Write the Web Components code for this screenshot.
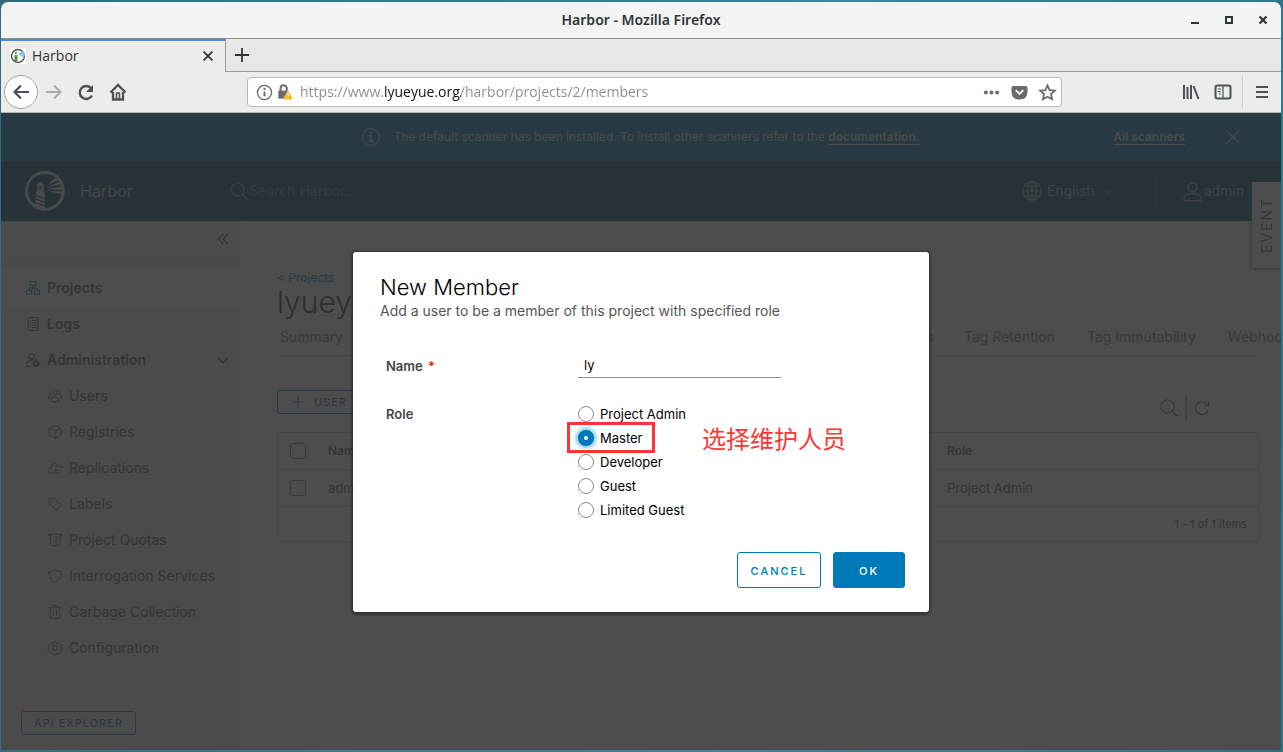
<!DOCTYPE html>
<html lang="en">
<head>
<meta charset="utf-8">
<title>Harbor</title>
<style>
html, body { margin: 0; height: 100%; }
body { font-family: Inter, "Noto Sans CJK SC", sans-serif; font-size: 14px; line-height: 24px; overflow: hidden; background: linear-gradient(100deg, #2f6d80, #3c859b 60%, #2f7285); }
</style>
</head>
<body>
<desktop-window>
  <window-title slot="title">Harbor - Mozilla Firefox</window-title>
  <browser-tabs slot="tabs">Harbor</browser-tabs>
  <browser-toolbar slot="toolbar"></browser-toolbar>
  <harbor-app></harbor-app>
</desktop-window>

<script>
const ICONS = {
  back: '<path d="M2 9h15M9 2.500L2.500 9 9 15.500" stroke-width="2.200"/>',
  forward: '<path d="M1 9h15M9 2.500L15.500 9 9 15.500" stroke-width="2"/>',
  reload: '<path d="M15 12.500A6.500 6.500 0 1 1 14 5" stroke-width="2.400"/><path d="M16 2v7H9z" fill="currentColor" stroke="none"/>',
  home: '<path d="M1.500 9.500L9 2l7.500 7.500M4 9v7.500h10V9" stroke-width="2.300"/><path d="M7.500 10h3v6h-3z" stroke-width="1.500"/>',
  info: '<circle cx="9" cy="9" r="7.500" stroke-width="1.400"/><path d="M9 8v5" stroke-width="2"/><circle cx="9" cy="5.300" r="1.200" fill="currentColor" stroke="none"/>',
  infoThin: '<circle cx="9" cy="9" r="8.400"/><path d="M7.300 7.600h2v5.600M7 13.400h4.600" stroke-width="1.200"/><circle cx="9" cy="4.900" r="1" fill="currentColor" stroke="none"/>',
  lock: '<path d="M4 8V5a3.500 3.500 0 0 1 7 0V8" stroke-width="2.200"/><path d="M1.500 7.500h11v9h-11z" fill="currentColor" stroke="none"/><path d="M12.500 7l5.500 10.500H7z" fill="#ffb000" stroke="#fff" stroke-width=".5"/><path d="M12.500 10.500v3.300M12.500 14.800v1.300" stroke="#fff" stroke-width="1.400"/>',
  dots: '<g fill="currentColor" stroke="none"><circle cx="3" cy="9" r="2.100"/><circle cx="9" cy="9" r="2.100"/><circle cx="15" cy="9" r="2.100"/></g>',
  pocket: '<path d="M.5 4q0-2 2-2h13q2 0 2 2v4q0 8.500-8.500 8.500T.500 8z" fill="currentColor" stroke="none"/><path d="M5 6.500l4 4 4-4" stroke="#fff" stroke-width="2"/>',
  star: '<path d="M9 1.500l2.200 5 5.500.6-4 3.600 1.200 5.500L9 13.500l-4.900 2.700 1.200-5.500-4-3.600 5.500-.6z" stroke-width="1.900"/>',
  library: '<path d="M2 2v14M5.500 4v12M9 2v14M11.500 3l5 13" stroke-width="2"/>',
  sidebar: '<rect x="1.500" y="2.500" width="15" height="13" rx="2" stroke-width="2"/><path d="M9 3v12M3.800 6h3M3.800 8.500h3M4.800 11h2" stroke-width="1.200"/>',
  menu: '<path d="M3 4h12M3 9h12M3 14h12" stroke-width="2"/>',
  close: '<path d="M4 4l10 10M14 4L4 14" stroke-width="2"/>',
  closeThin: '<path d="M1 1l16 16M17 1L1 17" stroke-width="1.500"/>',
  plus: '<path d="M9 1v16M1 9h16" stroke-width="2"/>',
  plusThin: '<path d="M9 1v16M1 9h16" stroke-width="1.400"/>',
  minimize: '<path d="M5 12h8" stroke-width="2"/>',
  maximize: '<path d="M6 6h6v6H6z" stroke-width="2"/>',
  closeBold: '<path d="M5.500 5.500l7 7M12.500 5.500l-7 7" stroke-width="2.200"/>',
  favicon: '<rect width="18" height="18" fill="#fff" stroke="none"/><circle cx="9" cy="9" r="7.300" stroke="#4a5257" stroke-width="1.500"/><path d="M5 8h3.500v6.500H5zM5.500 4.500h2v2.200h-2z" fill="#4a9b3c" stroke="none"/><path d="M9 7l5-4 3 3-1 5z" fill="#8cc3e8" stroke="none"/>',
  search: '<circle cx="7.500" cy="7.500" r="6.600"/><path d="M12.300 12.300l5 5" stroke-width="1.400"/>',
  refresh: '<path d="M16 11A7.200 7.200 0 1 1 15 5.200M16.500 1.500v4.800h-4.800" stroke-width="1.200"/>',
  globe: '<circle cx="9" cy="9" r="8.300"/><ellipse cx="9" cy="9" rx="4" ry="8.300"/><path d="M9 .7v16.600M.7 9h16.600M2.300 4.500h13.400M2.300 13.500h13.400"/>',
  user: '<circle cx="9" cy="5" r="4.200" stroke-width="1.300"/><path d="M1.200 17.700v-3.200c1.800-4.700 13.800-4.700 15.600 0v3.200z" stroke-width="1.300"/>',
  caret: '<path d="M2 6l7 7 7-7" stroke-width="2.200"/>',
  collapse: '<path d="M9 1.500L2 9l7 7.500M16 1.500L9 9l7 7.500" stroke-width="1.700"/>',
  projects: '<path d="M5.500.7h7v5h-7zM.7 12h6.500v5H.700zM10.800 12h6.500v5h-6.500zM9 5.700V9M4 12V9h10v3" stroke-width="1.300"/>',
  logs: '<path d="M2.700.7h12.600v16.600H2.700z" stroke-width="1.300"/><path d="M5 4.500h1.500M8 4.500h5M5 7.500h1.500M8 7.500h5M5 10.500h1.500M8 10.500h5M5 13.500h1.500M8 13.500h5" stroke-width="1.300"/>',
  admin: '<circle cx="7" cy="4.500" r="3.700" stroke-width="1.300"/><path d="M7.500 17H.700v-3.500c1-3 5-4.200 8-3.300" stroke-width="1.300"/><circle cx="13" cy="13.500" r="2.800" stroke-width="2.400"/><path d="M13 8.500v10M8.300 13.500h9.400M9.600 10l6.800 7M16.400 10l-6.800 7" stroke-width="1.500"/><circle cx="13" cy="13.500" r="1.500" fill="#eee" stroke="none"/>',
  users: '<circle cx="9" cy="5" r="2.800" stroke-width="1.200"/><path d="M4.500 16.500v-4c1.500-3 7.500-3 9 0v4zM5 1.500a2.500 2.500 0 1 0-1 5C2 7 .7 8.500.7 12h2M13 1.500a2.500 2.500 0 1 1 1 5c2 .5 3.300 2 3.300 5.500h-2" stroke-width="1.200"/>',
  registries: '<path d="M9 .8l7.500 3.500v9L9 17.200l-7.500-3.900v-9zM1.500 4.300L9 8l7.500-3.700M9 8v9" stroke-width="1.200"/>',
  replications: '<path d="M15.500 11c3 2 1.500 4.500-1.500 4.500H4C-.5 15.500-1.200 9.500 4 9c0-6 6.500-7.500 9-3.500M9 7h9.500M16 4.500L18.500 7 16 9.500M15 12H9M11 9.800L8.700 12l2.300 2.200" stroke-width="1.200"/>',
  labels: '<path d="M1 2h6.500l9.500 9-5.500 6L1 8z" stroke-width="1.200"/><circle cx="4.200" cy="5" r=".9" fill="currentColor" stroke="none"/>',
  quotas: '<path d="M.5 1.500h17v4M3.500 1.500v13q0 2 2 2h8q2 0 2-2v-13M.5 1.500L3.500 5M8 5h5M10 8h3M8 11h5M10 14h3" stroke-width="1.300"/>',
  shield: '<path d="M9 .8c2.500 1.800 5 2.300 7.500 2.400C17 10 14.500 14.500 9 17.300 3.500 14.500 1 10 1.500 3.200 4 3.100 6.500 2.600 9 .8z" stroke-width="1.200"/>',
  trash: '<path d="M1 3.500h16M6.500 3.500V.9h5v2.600M2.800 3.500v13.600h12.400V3.500M7 6.500v7.500M11 6.500v7.500" stroke-width="1.300"/>',
  gear: '<circle cx="9" cy="9" r="3.200" stroke-width="1.300"/><path d="M7.500.8h3l.5 2.300 1.500.6 2-1.300 2.100 2.100-1.300 2 .6 1.500 2.300.5v2l-2.300.5-.6 1.500 1.300 2-2.100 2.100-2-1.300-1.500.6-.5 2.300h-3l-.5-2.300-1.500-.6-2 1.300-2.100-2.100 1.300-2-.6-1.500-2.300-.5v-2l2.300-.5.6-1.500-1.300-2 2.100-2.100 2 1.300L7 3.100z" stroke-width="1.200"/>',
  logo: '<circle cx="9" cy="9" r="8.300" stroke-width="1.300"/><g fill="currentColor" stroke="none"><path d="M5.100 6.300L7 4.700l1.900 1.600zM5.500 6.300h2.900V9H5.500zM5 9.100h3.800l.2 8.100-4.400-1.300z"/><path d="M9.800 6.600l4.300-3.900 1.100 1.200zM9.800 7.300l5.900-2.600.6 1.400zM9.800 8l6.800-1v1.500zM9.800 8.700l6.900.5-.2 1.400z"/></g><path d="M5 11l4 1.500M5 12.700l4 1.500M5 14.300l4 1.500" stroke="#004a70" stroke-width=".5"/><path d="M6.400 6.800h1.100v1.500H6.400z" fill="#004a70" stroke="none"/>'
};

function define(name, html, setup) {
  const template = document.createElement('template');
  template.innerHTML = html;
  customElements.define(name, class extends HTMLElement {
    constructor() {
      super();
      this.attachShadow({ mode: 'open' }).append(template.content.cloneNode(true));
    }
    connectedCallback() { if (setup) setup(this, this.shadowRoot); }
  });
}

class UiIcon extends HTMLElement {
  static observedAttributes = ['name'];
  constructor() {
    super();
    this.attachShadow({ mode: 'open' }).innerHTML = `<style>
      :host { display: block; flex: none; width: var(--size, 18px); height: var(--size, 18px); }
      svg { display: block; width: 100%; height: 100%; fill: none; stroke: currentColor; stroke-width: 1; overflow: visible; }
    </style><svg viewBox="0 0 18 18" aria-hidden="true"></svg>`;
  }
  attributeChangedCallback(attribute, previous, name) {
    this.shadowRoot.querySelector('svg').innerHTML = ICONS[name] || '';
  }
}
customElements.define('ui-icon', UiIcon);

const BUTTON = `button { font: inherit; color: inherit; background: none; border: 0; padding: 0; display: flex; align-items: center; justify-content: center; }
  a { color: inherit; }`;

define('desktop-window', `<style>
  :host { display: flex; flex-direction: column; box-sizing: border-box; height: 100vh; padding: 2px 2px 2px 1px; }
  ::slotted(harbor-app) { flex: 1; min-height: 0; }
</style><slot name="title"></slot><slot name="tabs"></slot><slot name="toolbar"></slot><slot></slot>`);

define('window-title', `<style>
  :host { display: grid; grid-template-columns: 1fr auto 1fr; align-items: center; height: 36px; background: #f4f4f4; color: #2e3436; border-bottom: 1px solid #8f8f8c; border-radius: 7px 7px 0 0; font: 600 14px/20px "Noto Sans", sans-serif; }
  h1 { font: inherit; margin: 0; grid-column: 2; }
  div { display: flex; justify-content: flex-end; gap: 16px; padding-right: 9px; }
  ${BUTTON}
</style><h1><slot></slot></h1><div>
  <button aria-label="Minimize"><ui-icon name="minimize"></ui-icon></button>
  <button aria-label="Maximize"><ui-icon name="maximize"></ui-icon></button>
  <button aria-label="Close window"><ui-icon name="closeBold"></ui-icon></button></div>`);

define('browser-tabs', `<style>
  :host { display: flex; height: 33px; background: #e7e7e5; color: #2e3436; font: 14px/20px "Open Sans", sans-serif; }
  .tab { display: flex; align-items: center; gap: 6px; box-sizing: border-box; width: 225px; padding: 0 9px 2px; background: #ececea; border-top: 2px solid #4a90d9; border-right: 1px solid #9a9a97; }
  .tab span { flex: 1; }
  .rest { flex: 1; display: flex; align-items: center; padding-left: 8px; border-bottom: 1px solid #9a9a97; }
  ui-icon { --size: 16px; }
  ${BUTTON}
</style><div class="tab"><ui-icon name="favicon"></ui-icon><span><slot></slot></span><button aria-label="Close tab"><ui-icon name="close"></ui-icon></button></div>
<div class="rest"><button aria-label="New tab"><ui-icon name="plus"></ui-icon></button></div>`);

define('browser-toolbar', `<style>
  :host { display: flex; align-items: center; gap: 14px; height: 41px; box-sizing: border-box; padding: 0 10px 0 3px; background: #ececea; border-bottom: 1px solid #b5b5b0; color: #4a5053; font: 14px/20px "Open Sans", sans-serif; }
  ui-icon { --size: 18px; }
  .back { box-sizing: border-box; width: 34px; height: 34px; border: 1px solid #a5a5a2; border-radius: 50%; background: #fcfcfc; margin-right: -7px; }
  .off { color: #aaaaa8; }
  .address { flex: 1; display: flex; align-items: center; box-sizing: border-box; height: 30px; margin: 0 106px; padding: 0 5px 0 8px; border: 1px solid #b5b5b2; border-radius: 4px; background: #fff; color: #6b6b6b; }
  .address button { margin-left: 11px; }
  .address button ui-icon, .address > ui-icon { --size: 17px; }
  .address .lock { margin: 0 7px 0 4px; --size: 16px; }
  input { flex: 1; min-width: 0; border: 0; outline: 0; padding: 0; font: inherit; color: #8c8c8c; -webkit-text-fill-color: transparent; background: linear-gradient(90deg, #8c8c8c 84px, #111 84px, #111 161px, #8c8c8c 161px); -webkit-background-clip: text; background-clip: text; }
  .rule { width: 1px; height: 34px; background: #d0d0cd; margin: 0 -4px; }
  ${BUTTON}
</style>
<button class="back" aria-label="Back"><ui-icon name="back"></ui-icon></button>
<button class="off" aria-label="Forward"><ui-icon name="forward"></ui-icon></button>
<button aria-label="Reload"><ui-icon name="reload"></ui-icon></button>
<button aria-label="Home"><ui-icon name="home"></ui-icon></button>
<div class="address"><ui-icon name="info"></ui-icon><ui-icon class="lock" name="lock"></ui-icon>
  <input aria-label="Address" value="https://www.lyueyue.org/harbor/projects/2/members">
  <button aria-label="Page actions"><ui-icon name="dots"></ui-icon></button>
  <button aria-label="Save to Pocket"><ui-icon name="pocket"></ui-icon></button>
  <button aria-label="Bookmark"><ui-icon name="star"></ui-icon></button></div>
<button aria-label="Library"><ui-icon name="library"></ui-icon></button>
<button aria-label="Sidebars"><ui-icon name="sidebar"></ui-icon></button>
<span class="rule"></span>
<button aria-label="Menu"><ui-icon name="menu"></ui-icon></button>`);

define('harbor-app', `<style>
  :host { display: flex; flex-direction: column; position: relative; overflow: hidden; background: #fafafa; }
  main { flex: 1; display: flex; min-height: 0; }
  project-page { flex: 1; min-width: 0; }
  .backdrop { position: absolute; inset: 0; display: grid; place-items: center; background: rgba(46, 46, 46, .85); }
  event-tab { position: absolute; right: 0; top: 69px; }
</style>
<scanner-banner></scanner-banner><harbor-header></harbor-header>
<main><side-nav></side-nav><project-page></project-page></main>
<event-tab>EVENT</event-tab>
<div class="backdrop"><member-dialog></member-dialog></div>`);

define('scanner-banner', `<style>
  :host { display: grid; grid-template-columns: 1fr auto 1fr; align-items: center; height: 48px; background: #0079b8; color: #eee; font-size: 12px; }
  p { grid-column: 2; display: flex; align-items: center; gap: 13px; margin: 0; }
  .end { display: flex; justify-content: flex-end; align-items: center; gap: 41px; padding-right: 41px; }
  a { font-weight: 600; text-underline-offset: 3px; }
  .end ui-icon { --size: 14px; }
  ${BUTTON}
</style><p><ui-icon name="infoThin"></ui-icon><span>The default scanner has been installed. To install other scanners refer to the <a href="#docs">documentation.</a></span></p>
<div class="end"><a href="#scanners">All scanners</a><button aria-label="Dismiss"><ui-icon name="closeThin"></ui-icon></button></div>`);

define('harbor-header', `<style>
  :host { display: flex; align-items: center; height: 60px; padding: 0 23px 0 24px; background: #004a70; color: #c8d0d6; }
  .logo { --size: 40px; color: #e4e4e4; }
  h2 { font-size: 16px; font-weight: 400; width: 150px; margin: 0 0 0 15px; }
  .search { flex: 1; display: flex; align-items: center; gap: 1px; color: #9ab2c0; }
  input { flex: 1; min-width: 0; font: inherit; color: inherit; background: none; border: 0; padding: 0; outline: 0; }
  input::placeholder { color: #5f8299; opacity: 1; }
  .menu { display: flex; align-items: center; gap: 5px; color: #a0b6c2; }
  .caret { --size: 8px; margin-left: 4px; }
  .globe { --size: 20px; }
  .rule { width: 1px; height: 40px; background: #2f6d8c; margin: 0 27px 0 43px; }
  .account { gap: 2px; }
  .account .user { --size: 19px; }
  ${BUTTON}
</style><ui-icon class="logo" name="logo"></ui-icon><h2>Harbor</h2>
<label class="search"><ui-icon name="search"></ui-icon><input type="search" placeholder="Search Harbor..." aria-label="Search Harbor"></label>
<button class="menu"><ui-icon class="globe" name="globe"></ui-icon>English<ui-icon class="caret" name="caret"></ui-icon></button>
<span class="rule"></span>
<button class="menu account"><ui-icon class="user" name="user"></ui-icon>admin<ui-icon class="caret" name="caret"></ui-icon></button>`);

define('event-tab', `<style>
  :host { display: block; background: #fff; box-shadow: 0 0 4px #666; }
  button { display: block; box-sizing: border-box; width: 29px; height: 86px; padding: 0; border: 0; background: none; font: inherit; font-size: 14px; letter-spacing: 2px; color: #565656; writing-mode: vertical-rl; rotate: 180deg; text-align: center; line-height: 29px; }
</style><button><slot></slot></button>`);

define('side-nav', `<style>
  :host { display: flex; flex-direction: column; width: 240px; background: #eee; color: #565656; box-sizing: border-box; }
  .top { display: flex; justify-content: flex-end; align-items: center; height: 36px; padding-right: 12px; border-bottom: 1px solid #ddd; margin-bottom: 12px; }
  .top ui-icon { --size: 12px; }
  nav { flex: 1; display: flex; flex-direction: column; }
  .api { align-self: flex-start; margin: 0 0 15px 20px; box-sizing: border-box; height: 24px; padding: 0 12px; border: 1px solid #0079b8; border-radius: 3px; color: #0079b8; font-size: 11px; letter-spacing: 1px; }
  ${BUTTON}
</style><div class="top"><button aria-label="Collapse menu"><ui-icon name="collapse"></ui-icon></button></div>
<nav>
<nav-item icon="projects" active>Projects</nav-item>
<nav-item icon="logs">Logs</nav-item>
<nav-item icon="admin" open>Administration</nav-item>
<nav-item icon="users" sub>Users</nav-item>
<nav-item icon="registries" sub>Registries</nav-item>
<nav-item icon="replications" sub>Replications</nav-item>
<nav-item icon="labels" sub>Labels</nav-item>
<nav-item icon="quotas" sub>Project Quotas</nav-item>
<nav-item icon="shield" sub>Interrogation Services</nav-item>
<nav-item icon="trash" sub>Garbage Collection</nav-item>
<nav-item icon="gear" sub>Configuration</nav-item>
</nav><button class="api">API EXPLORER</button>`);

define('nav-item', `<style>
  :host { display: block; --size: 14px; font-weight: 600; }
  :host([sub]) { font-weight: 400; }
  a { display: flex; align-items: center; gap: 7px; height: 36px; padding: 0 12px 0 25px; color: #565656; text-decoration: none; }
  :host([sub]) a { padding-left: 47px; }
  :host([active]) a { background: #fff; }
  :host([active]) .icon { color: #0079b8; }
  span { flex: 1; }
  .caret { --size: 12px; display: none; }
  :host([open]) .caret { display: block; }
</style><a href="#"><ui-icon class="icon"></ui-icon><span><slot></slot></span><ui-icon class="caret" name="caret"></ui-icon></a>`,
(host, root) => {
  const icon = host.getAttribute('icon');
  root.querySelector('.icon').setAttribute('name', icon);
  root.querySelector('a').href = '#' + icon;
});

define('project-page', `<style>
  :host { display: block; padding: 45px 21px 0 36px; color: #565656; }
  .crumb { display: block; font-size: 12px; line-height: 24px; color: #0079b8; text-decoration: none; }
  h2 { margin: 0; font-size: 30px; font-weight: 300; line-height: 24px; height: 24px; color: #333; }
  .tabs { display: flex; height: 42px; box-sizing: border-box; align-items: center; padding: 5px 0 0 3px; border-bottom: 1px solid #ccc; white-space: nowrap; }
  .tabs a { color: #747474; text-decoration: none; flex: none; }
  .first { width: 684px; flex: none; display: flex; justify-content: space-between; padding-right: 30px; box-sizing: border-box; }
  .last { display: flex; gap: 32px; }
  .bar { display: flex; align-items: flex-end; padding: 34px 50px 12px 0; }
  .bar button { height: 24px; }
  .bar .add { box-sizing: border-box; padding: 0 12px; gap: 10px; border: 1px solid #0079b8; border-radius: 3px; color: #0079b8; font-size: 11px; letter-spacing: 1px; margin: 0 auto 6px 0; }
  .add ui-icon { --size: 12px; margin-left: 2px; }
  .bar hr { width: 2px; height: 24px; margin: 0 7px; border: 0; background: #bbb; }
  .refresh { --size: 16px; }
  ${BUTTON}
</style><a class="crumb" href="#projects">&lt; Projects</a><h2>lyueyue</h2>
<nav class="tabs"><div class="first"><a href="#summary">Summary</a><a href="#repositories">Repositories</a><a href="#charts">Helm Charts</a><a href="#members">Members</a><a href="#labels">Labels</a><a href="#scanner">Scanner</a><a href="#robots">Robot Accounts</a></div>
<div class="last"><a href="#retention">Tag Retention</a><a href="#immutability">Tag Immutability</a><a href="#webhooks">Webhooks</a></div></nav>
<div class="bar"><button class="add"><ui-icon name="plusThin"></ui-icon>USER</button>
<button aria-label="Search members"><ui-icon name="search"></ui-icon></button><hr><button aria-label="Refresh"><ui-icon class="refresh" name="refresh"></ui-icon></button></div>
<member-table></member-table>`);

define('member-table', `<style>
  :host { display: block; border: 1px solid #ccc; border-radius: 3px; font-size: 13px; color: #565656; }
  table { width: 100%; border-collapse: collapse; table-layout: fixed; }
  th, td { height: 36px; padding: 0 12px; text-align: left; border-bottom: 1px solid #ccc; font-weight: 400; white-space: nowrap; }
  th { font-size: 12px; font-weight: 600; background: linear-gradient(#ddd, #ddd) right / 1px 24px no-repeat; }
  th:last-child { background: none; }
  .tick { width: 14px; } .type { width: 80px; } .role { width: 300px; }
  input { display: block; appearance: none; width: 16px; height: 16px; margin: 0; border: 1px solid #808080; border-radius: 3px; box-sizing: border-box; }
  .foot { padding: 0 12px; text-align: right; font-size: 11px; line-height: 34px; }
</style><table><thead><tr><th class="tick"><input type="checkbox" aria-label="Select all"></th><th>Name</th><th class="type">Member Type</th><th class="role">Role</th></tr></thead>
<tbody><tr><td><input type="checkbox" aria-label="Select admin"></td><td>admin</td><td>User</td><td>Project Admin</td></tr></tbody></table>
<div class="foot">1 - 1 of 1 items</div>`);

define('role-option', `<style>
  :host { display: block; position: relative; }
  label { display: flex; align-items: center; gap: 6px; line-height: 24px; }
  input { appearance: none; width: 16px; height: 16px; margin: 0; border: 1px solid #8c8c8c; border-radius: 50%; box-sizing: border-box; background: #fff; }
  input:checked { border: 6px solid #0079b8; box-shadow: 0 0 4px 2px #6bc1e3; }
</style><label><input type="radio" name="role"><slot></slot></label><slot name="note"></slot>`,
(host, root) => { root.querySelector('input').checked = host.hasAttribute('checked'); });

define('callout-note', `<style>
  :host { position: absolute; left: -11px; top: -4px; display: flex; align-items: center; gap: 47px; color: #ff3535; font: 24px/32px "Noto Sans CJK SC", sans-serif; white-space: nowrap; pointer-events: none; }
  i { box-sizing: border-box; width: 88px; height: 31px; border: 3px solid #ff3535; }
</style><i></i><span><slot></slot></span>`);

define('member-dialog', `<style>
  :host { display: block; box-sizing: border-box; width: 576px; padding: 23px 24px 24px; border-radius: 3px; background: #fff; color: #000; box-shadow: 0 1px 2px 2px rgba(0, 0, 0, .3); font-size: 13px; }
  header { padding: 0 3px; }
  h2 { margin: 0; font-size: 22px; font-weight: 300; line-height: 24px; }
  header p { margin: 0; font-size: 14px; color: #565656; line-height: 24px; }
  form { display: grid; grid-template-columns: 192px 1fr; row-gap: 24px; padding: 31px 9px 30px; }
  .label { font-weight: 600; color: #454545; }
  em { font-style: normal; color: #e62700; margin-left: 2px; }
  .name { width: 203px; height: 24px; box-sizing: border-box; padding: 0 6px; border: 0; border-bottom: 1px solid #8c8c8c; outline: 0; font: inherit; }
  footer { display: flex; justify-content: flex-end; gap: 12px; }
  footer button { display: flex; align-items: center; justify-content: center; height: 36px; box-sizing: border-box; border: 1px solid #0079b8; border-radius: 3px; font: 500 11px/24px Inter, sans-serif; letter-spacing: 2px; background: #fff; color: #0079b8; width: 72px; padding: 2px 0 0; }
  footer .cancel { width: 84px; }
  footer .ok { background: #0079b8; color: #fff; }
</style><header><h2>New Member</h2><p>Add a user to be a member of this project with specified role</p></header>
<form><label class="label" for="name">Name <em>*</em></label><input class="name" id="name" value="ly">
<span class="label" id="role">Role</span><div role="radiogroup" aria-labelledby="role">
<role-option>Project Admin</role-option>
<role-option checked>Master<callout-note slot="note">选择维护人员</callout-note></role-option>
<role-option>Developer</role-option><role-option>Guest</role-option><role-option>Limited Guest</role-option></div></form>
<footer><button class="cancel" type="button">CANCEL</button><button class="ok" type="button">OK</button></footer>`);
</script>
</body>
</html>
